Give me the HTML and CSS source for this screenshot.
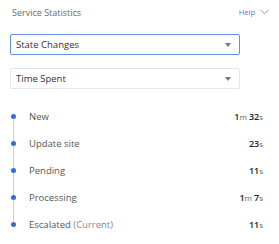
FILE: index.html
```html
<!DOCTYPE html>
<html>
<head>
<meta charset="utf-8">
<link rel="stylesheet" href="styles.css">
</head>
<body>
<div class="panel">
  <div class="header">
    <span class="title">Service Statistics</span>
    <span class="actions">
      <a class="help">Help</a>
      <svg class="chev" width="9" height="6" viewBox="0 0 9 6"><path d="M0.5 0.8 L4.5 4.8 L8.5 0.8" fill="none" stroke="#999" stroke-width="1"/></svg>
    </span>
  </div>
  <div class="select active"><span>State Changes</span><span class="caret"></span></div>
  <div class="select"><span>Time Spent</span><span class="caret"></span></div>
  <ul class="timeline">
    <li><span class="dot"></span><span class="label">New</span><span class="val"><b>1</b>m <b>32</b>s</span></li>
    <li><span class="dot"></span><span class="label">Update site</span><span class="val"><b>23</b>s</span></li>
    <li><span class="dot"></span><span class="label">Pending</span><span class="val"><b>11</b>s</span></li>
    <li><span class="dot"></span><span class="label">Processing</span><span class="val"><b>1</b>m <b>7</b>s</span></li>
    <li class="last"><span class="dot"></span><span class="label">Escalated <span class="muted">(Current)</span></span><span class="val"><b>11</b>s</span></li>
  </ul>
</div>
</body>
</html>
```
FILE: styles.css
```css
html, body { margin: 0; padding: 0; background: #fff; }
body { font-family: "Open Sans", sans-serif; color: #333; }
.panel { width: 279px; padding: 6px 10px 0 10px; box-sizing: border-box; }
.header { display: flex; justify-content: space-between; align-items: center; height: 12px; padding-left: 2px; }
.title { font-size: 9px; color: #6b6b6b; }
.actions { display: flex; align-items: center; gap: 5px; }
.help { font-size: 7.5px; color: #5a78d8; }
.chev { display: block; }
.select { width: 230px; height: 21px; box-sizing: border-box; border: 1px solid #e6e6e6; border-radius: 2px; display: flex; align-items: center; justify-content: space-between; padding: 0 8px 0 5px; font-size: 9.5px; color: #333; margin-top: 16px; }
.select.active { border-color: #5c90ea; margin-top: 16px; }
.select + .select { margin-top: 13px; }
.caret { width: 0; height: 0; border-left: 3px solid transparent; border-right: 3px solid transparent; border-top: 4px solid #777; }
.timeline { list-style: none; margin: 14px 0 0 0; padding: 0; width: 253px; }
.timeline li { position: relative; display: flex; align-items: center; height: 27px; font-size: 9.5px; color: #555; }
.timeline li::before { content: ""; position: absolute; left: 3px; top: 13px; height: 27px; width: 1px; background: #cfcfcf; }
.timeline li.last::before { display: none; }
.dot { width: 5px; height: 5px; border-radius: 50%; background: #2e6fe0; margin-left: 1px; position: relative; z-index: 1; flex: none; }
.label { margin-left: 13px; flex: 1; }
.muted { color: #888; }
.val { font-size: 8px; color: #666; }
.val b { font-weight: 600; color: #222; font-size: 9px; }
```
